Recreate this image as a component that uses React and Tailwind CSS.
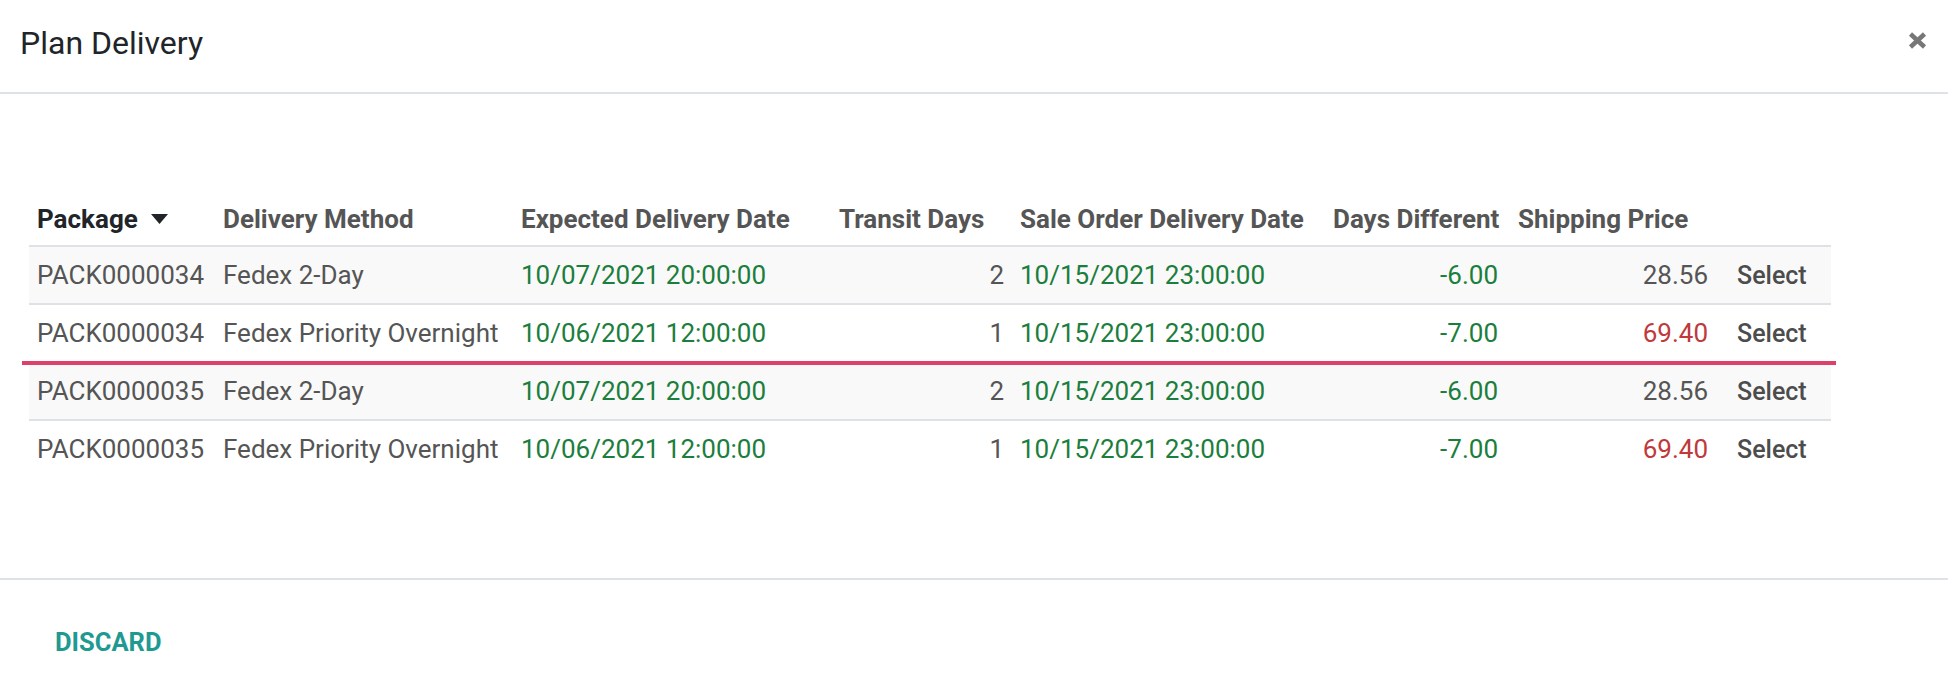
import React from "react";

const cols = "grid grid-cols-[186px_298px_318px_181px_313px_181px_210px_115px]";

const rows = [
  { pkg: "PACK0000034", method: "Fedex 2-Day", exp: "10/07/2021 20:00:00", transit: "2", sale: "10/15/2021 23:00:00", diff: "-6.00", price: "28.56", red: false, striped: true },
  { pkg: "PACK0000034", method: "Fedex Priority Overnight", exp: "10/06/2021 12:00:00", transit: "1", sale: "10/15/2021 23:00:00", diff: "-7.00", price: "69.40", red: true, striped: false },
  { pkg: "PACK0000035", method: "Fedex 2-Day", exp: "10/07/2021 20:00:00", transit: "2", sale: "10/15/2021 23:00:00", diff: "-6.00", price: "28.56", red: false, striped: true },
  { pkg: "PACK0000035", method: "Fedex Priority Overnight", exp: "10/06/2021 12:00:00", transit: "1", sale: "10/15/2021 23:00:00", diff: "-7.00", price: "69.40", red: true, striped: false },
];

function Row({ r, border }) {
  return (
    <div
      className={`${cols} items-center pb-[1px] text-[26px] leading-[30px] text-[#555555] ${r.striped ? "bg-[#f9f9f9]" : "bg-white"} ${border ? "h-[58px] border-b-2 border-[#dee2e6]" : "h-[56px]"}`}
    >
      <div className="pl-[8px] whitespace-nowrap">{r.pkg}</div>
      <div className="pl-[8px] whitespace-nowrap">{r.method}</div>
      <div className="pl-[8px] whitespace-nowrap text-[#1b7e3c]">{r.exp}</div>
      <div className="pr-[8px] text-right">{r.transit}</div>
      <div className="pl-[8px] whitespace-nowrap text-[#1b7e3c]">{r.sale}</div>
      <div className="pr-[8px] text-right text-[#1b7e3c]">{r.diff}</div>
      <div className={`pr-[8px] text-right ${r.red ? "text-[#c0393b]" : ""}`}>{r.price}</div>
      <div className="pl-[21px] pt-[2px]">
        <button className="font-medium text-[#4c4c4c] text-[25px] leading-[30px]">Select</button>
      </div>
    </div>
  );
}

export default function App() {
  return (
    <div className="w-[1948px] h-[676px] bg-white overflow-hidden flex flex-col font-[Roboto,'Liberation_Sans',sans-serif]">
      <header className="h-[94px] shrink-0 border-b-2 border-[#dee2e6] flex items-start justify-between pl-[20px] pr-[21px]">
        <h1 className="mt-[24px] text-[32px] leading-[38px] text-[#212529] font-normal">Plan Delivery</h1>
        <button className="mt-[32px]" aria-label="Close">
          <svg width="19" height="17" viewBox="0 0 19 17">
            <path d="M2.5 2 L16.5 15 M16.5 2 L2.5 15" stroke="#777777" strokeWidth="4.5" strokeLinecap="butt" fill="none" />
          </svg>
        </button>
      </header>

      <main className="h-[484px] shrink-0 pt-[110px] pl-[29px]">
        <div className="w-[1802px]">
          <div className={`${cols} border-b-2 border-[#dee2e6] pb-[11px] text-[26px] leading-[30px] font-bold text-[#555555]`}>
            <div className="pl-[8px] flex items-center text-[#212529] whitespace-nowrap">
              Package
              <svg className="ml-[13px]" width="17" height="10" viewBox="0 0 17 10">
                <polygon points="0,0 17,0 8.5,10" fill="#212529" />
              </svg>
            </div>
            <div className="pl-[8px] whitespace-nowrap">Delivery Method</div>
            <div className="pl-[8px] whitespace-nowrap">Expected Delivery Date</div>
            <div className="pl-[8px] whitespace-nowrap">Transit Days</div>
            <div className="pl-[8px] whitespace-nowrap">Sale Order Delivery Date</div>
            <div className="pl-[8px] whitespace-nowrap">Days Different</div>
            <div className="pl-[12px] whitespace-nowrap">Shipping Price</div>
            <div></div>
          </div>
          <Row r={rows[0]} border />
          <Row r={rows[1]} border={false} />
          <div className="relative z-10 h-[4px] bg-[#dd4169] ml-[-7px] w-[1814px] mb-[-2px]"></div>
          <Row r={rows[2]} border />
          <Row r={rows[3]} border={false} />
        </div>
      </main>

      <footer className="shrink-0 flex-1 border-t-2 border-[#dee2e6] pt-[47px] pl-[55px]">
        <button className="text-[25.5px] leading-[30px] font-bold text-[#1f9a92]">DISCARD</button>
      </footer>
    </div>
  );
}
